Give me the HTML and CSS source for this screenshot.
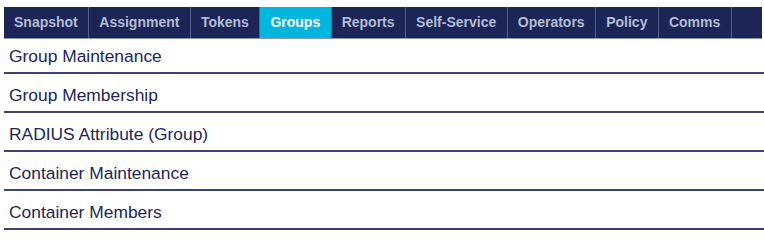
FILE: index.html
```html
<!DOCTYPE html>
<html lang="en">
<head>
    <meta charset="UTF-8">
    <meta name="viewport" content="width=device-width, initial-scale=1.0">
    <title>Groups</title>
    <link rel="stylesheet" href="styles.css">
</head>
<body>
    <!-- Top tab menu -->
    <ul class="tabs">
        <li><a href="#">Snapshot</a></li>
        <li><a href="#">Assignment</a></li>
        <li><a href="#">Tokens</a></li>
        <li class="active"><a href="#">Groups</a></li>
        <li><a href="#">Reports</a></li>
        <li><a href="#">Self-Service</a></li>
        <li><a href="#">Operators</a></li>
        <li><a href="#">Policy</a></li>
        <li><a href="#">Comms</a></li>
        <li class="filler"></li>
    </ul>

    <!-- Sub menu for the selected tab -->
    <ul class="submenu">
        <li><a href="#">Group Maintenance</a></li>
        <li><a href="#">Group Membership</a></li>
        <li><a href="#">RADIUS Attribute (Group)</a></li>
        <li><a href="#">Container Maintenance</a></li>
        <li><a href="#">Container Members</a></li>
    </ul>
</body>
</html>
```

FILE: styles.css
```css
body {
    font-family: "Liberation Sans", Arial, sans-serif;
    margin: 0;
    padding: 0;
    background: #fff;
}
ul {
    list-style: none;
    margin: 0;
    padding: 0;
}
a {
    text-decoration: none;
}
.tabs {
    display: flex;
    margin: 7px 2px 0 4px;
    height: 31px;
    background-color: #1b2657;
    border-bottom: 1px solid #8a93b3;
}
.tabs li {
    border-right: 1px solid #56618a;
}
.tabs a {
    display: block;
    padding: 0 10.5px 0 10px;
    line-height: 31px;
    font-size: 14px;
    font-weight: bold;
    color: #b3bbd4;
}
.tabs li.active {
    background-color: #00b6de;
}
.tabs li.active a {
    color: #fff;
}
.tabs li.filler {
    flex: 1;
    border-right: none;
}
.submenu {
    margin-left: 4px;
}
.submenu li {
    border-bottom: 2px solid #3b4670;
}
.submenu a {
    display: block;
    padding: 12px 5px 7px;
    line-height: 18px;
    font-size: 17.4px;
    color: #1d2756;
}
.submenu li:first-child a {
    padding-top: 8px;
}
```
